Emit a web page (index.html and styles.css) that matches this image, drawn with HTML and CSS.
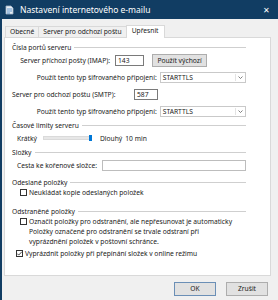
FILE: index.html
```html
<!DOCTYPE html>
<html lang="cs">
<head>
    <meta charset="UTF-8">
    <title>Nastavení internetového e-mailu</title>
    <link rel="stylesheet" href="styles.css">
</head>
<body>
    <div class="window">
        <div class="titlebar">
            <svg class="app-icon" width="9" height="10" viewBox="0 0 9 10">
                <path d="M1 1h5l2 2v6H1z" fill="#e8eef4" stroke="#9fb3c6" stroke-width="0.8"/>
                <path d="M2 4h5M2 6h5M2 8h3" stroke="#3d7fc1" stroke-width="0.8"/>
            </svg>
            <span class="title">Nastavení internetového e-mailu</span>
            <span class="close">✕</span>
        </div>

        <div class="tabs">
            <div class="tab">Obecné</div>
            <div class="tab">Server pro odchozí poštu</div>
            <div class="tab active">Upřesnit</div>
        </div>

        <div class="panel">
            <div class="group-title">Čísla portů serveru</div>
            <div class="row">
                <span class="lbl lbl-port">Server příchozí pošty (IMAP):</span>
                <span class="input port">143</span>
                <span class="btn default-btn">Použít výchozí</span>
            </div>
            <div class="row">
                <span class="lbl lbl-enc">Použít tento typ šifrovaného připojení:</span>
                <span class="select">STARTTLS<span class="arrow"><svg width="5" height="3" viewBox="0 0 5 3"><path d="M0.5 0.5l2 2 2-2" fill="none" stroke="#606060" stroke-width="0.8"/></svg></span></span>
            </div>
            <div class="row">
                <span class="lbl-smtp">Server pro odchozí poštu (SMTP):</span>
                <span class="input port smtp">587</span>
            </div>
            <div class="row last">
                <span class="lbl lbl-enc">Použít tento typ šifrovaného připojení:</span>
                <span class="select">STARTTLS<span class="arrow"><svg width="5" height="3" viewBox="0 0 5 3"><path d="M0.5 0.5l2 2 2-2" fill="none" stroke="#606060" stroke-width="0.8"/></svg></span></span>
            </div>

            <div class="group-title">Časové limity serveru</div>
            <div class="slider-row">
                <span class="short">Krátký</span>
                <span class="track"><span class="thumb"></span></span>
                <span class="long">Dlouhý</span>
                <span>10 min</span>
            </div>

            <div class="group-title g3">Složky</div>
            <div class="path-row">
                <span>Cesta ke kořenové složce:</span>
                <span class="input path"></span>
            </div>

            <div class="group-title g4">Odeslané položky</div>
            <div class="check-row">
                <span class="box"></span>
                <span>Neukládat kopie odeslaných položek</span>
            </div>

            <div class="group-title g5">Odstraněné položky</div>
            <div class="check-row">
                <span class="box"></span>
                <span>Označit položky pro odstranění, ale nepřesunovat je automaticky</span>
            </div>
            <div class="note">
                Položky označené pro odstranění se trvale odstraní při<br>
                vyprázdnění položek v poštovní schránce.
            </div>
            <div class="check-row outer">
                <span class="box checked"><svg width="7" height="7" viewBox="0 0 7 7"><path d="M1.2 3.6l1.5 1.5 3.2-3.4" fill="none" stroke="#333" stroke-width="0.9"/></svg></span>
                <span>Vyprázdnit položky při přepínání složek v online režimu</span>
            </div>
        </div>

        <div class="footer">
            <span class="btn ok">OK</span>
            <span class="btn">Zrušit</span>
        </div>
    </div>
</body>
</html>
```

FILE: styles.css
```css
body {
    margin: 0;
    font-family: "Noto Sans", sans-serif;
    font-size: 6.7px;
    color: #1a1a1a;
    overflow: hidden;
    white-space: nowrap;
}

.window {
    width: 276px;
    height: 300px;
    background: #f0f0f0;
    border-left: 2px solid #113d63;
}

.titlebar {
    height: 19px;
    margin-left: -2px;
    background: #113d63;
    color: #fff;
    display: flex;
    align-items: center;
    padding-left: 5px;
}

.app-icon {
    margin-right: 6px;
}

.title {
    font-size: 8.5px;
    flex: 1;
}

.close {
    font-size: 8px;
    margin-right: 8px;
}

.tabs {
    display: flex;
    align-items: flex-end;
    height: 18px;
    padding-left: 3px;
}

.tab {
    height: 10px;
    line-height: 10px;
    padding: 0 4px;
    border: 1px solid #d9d9d9;
    border-bottom: none;
    background: #f0f0f0;
    margin-right: -1px;
}

.tab.active {
    position: relative;
    height: 12px;
    padding: 0 5px;
    background: #fff;
    margin-bottom: -1px;
    z-index: 1;
}

.panel {
    margin-left: 2px;
    width: 250px;
    height: 233px;
    padding: 4px 8px 0 7px;
    background: #fff;
    border: 1px solid #d9d9d9;
}

.group-title {
    display: flex;
    align-items: center;
    height: 10px;
    width: 234px;
}

.group-title::after {
    content: "";
    flex: 1;
    height: 1px;
    background: #cfcfcf;
    margin-left: 3px;
}

.row {
    display: flex;
    align-items: center;
    height: 17px;
    width: 234px;
}

.row:first-of-type {
    margin-top: 1px;
}

.row.last {
    height: 16px;
    margin-bottom: 1px;
}

.lbl {
    text-align: right;
}

.lbl-port {
    width: 98px;
    margin-right: 5px;
}

.lbl-smtp {
    width: 117px;
    margin-right: 5px;
}

.lbl-enc {
    width: 146px;
    margin-right: 3px;
}

.input {
    height: 9px;
    line-height: 9px;
    padding: 0 2px;
    border: 1px solid #7a7a7a;
    background: #fff;
}

.port {
    width: 23px;
}

.port.smtp {
    width: 18px;
}

.btn {
    display: inline-block;
    height: 11px;
    line-height: 11px;
    text-align: center;
    background: #e1e1e1;
    border: 1px solid #adadad;
}

.default-btn {
    width: 53px;
    margin-left: 8px;
}

.select {
    display: flex;
    align-items: center;
    width: 83px;
    height: 9px;
    padding-left: 2px;
    border: 1px solid #c9c9c9;
    background: #fff;
}

.arrow {
    margin-left: auto;
    width: 8px;
    height: 7px;
    margin-right: 1px;
    border-left: 1px solid #e3e3e3;
    display: flex;
    align-items: center;
    justify-content: center;
}

.slider-row {
    display: flex;
    align-items: center;
    height: 14px;
    margin-top: 1px;
    padding-left: 5px;
}

.track {
    position: relative;
    width: 47px;
    height: 2px;
    margin-left: 6px;
    background: #e7e7e7;
    border: 1px solid #dadada;
}

.thumb {
    position: absolute;
    right: -1px;
    top: -2px;
    width: 3px;
    height: 6px;
    background: #0078d7;
}

.long {
    margin-left: 8px;
    margin-right: 3px;
}

.g3 {
    margin-top: 2px;
}

.path-row {
    display: flex;
    align-items: center;
    height: 16px;
    padding-left: 5px;
    width: 229px;
}

.path {
    flex: 1;
    height: 9px;
    margin-left: 5px;
    border-color: #bdbdbd;
}

.g4 {
    margin-top: 4px;
}

.g5 {
    margin-top: 9px;
}

.check-row {
    display: flex;
    align-items: center;
    height: 10px;
    padding-left: 8px;
}

.check-row.outer {
    margin-top: 2px;
    padding-left: 4px;
}

.box {
    width: 5px;
    height: 5px;
    border: 1px solid #333;
    background: #fff;
    margin-right: 2px;
    display: flex;
}

.box.checked svg {
    margin: -1px;
}

.note {
    padding-left: 17px;
    line-height: 9.5px;
    padding-top: 1px;
}

.footer {
    display: flex;
    justify-content: flex-end;
    margin-top: 6px;
    padding-right: 10px;
}

.footer .btn {
    width: 40px;
    height: 12px;
    line-height: 12px;
    margin-left: 10px;
}

.ok {
    border-color: #6b8fb6;
}
```
